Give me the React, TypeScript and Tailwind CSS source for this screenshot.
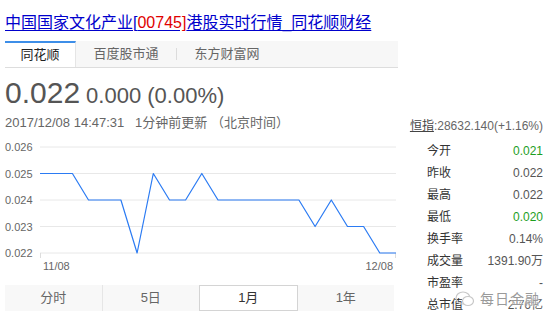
import React from 'react';

const FONT = "font-['Liberation_Sans','Noto_Sans_CJK_SC',sans-serif]";

const prices = [
  0.025, 0.025, 0.025, 0.024, 0.024, 0.024, 0.022, 0.025, 0.024, 0.024, 0.025, 0.024,
  0.024, 0.024, 0.024, 0.024, 0.024, 0.023, 0.024, 0.023, 0.023, 0.022, 0.022,
];

const levels = [0.026, 0.025, 0.024, 0.023, 0.022];

const stats = [
  { label: '今开', value: '0.021', green: true },
  { label: '昨收', value: '0.022' },
  { label: '最高', value: '0.022' },
  { label: '最低', value: '0.020', green: true },
  { label: '换手率', value: '0.14%' },
  { label: '成交量', value: '1391.90万' },
  { label: '市盈率', value: '-' },
  { label: '总市值', value: '2.76亿' },
];

const ranges = ['分时', '5日', '1月', '1年'];

const yOf = (v: number) => 13 + ((0.026 - v) / 0.001) * 26.5;

const PriceChart: React.FC = () => {
  const x0 = 40;
  const x1 = 396;
  const step = (x1 - x0) / (prices.length - 1);
  const points = prices.map((p, i) => `${(x0 + i * step).toFixed(1)},${yOf(p).toFixed(1)}`).join(' ');

  return (
    <svg width={398} height={145} className="block">
      {levels.map((lv) => (
        <g key={lv}>
          <line x1={x0} x2={x1} y1={yOf(lv)} y2={yOf(lv)} stroke="#e8e8e8" strokeWidth={1} />
          <text x={5} y={yOf(lv) + 4} fontSize={11} fill="#666" fontFamily="Liberation Sans, sans-serif">
            {lv.toFixed(3)}
          </text>
        </g>
      ))}
      <line x1={x0 + 0.5} x2={x0 + 0.5} y1={119} y2={124} stroke="#ddd" />
      <line x1={x1 - 0.5} x2={x1 - 0.5} y1={119} y2={124} stroke="#ddd" />
      <polyline points={points} fill="none" stroke="#2b7bf3" strokeWidth={1.2} strokeLinejoin="round" />
      <text x={43} y={136} fontSize={11} fill="#666" fontFamily="Liberation Sans, sans-serif">11/08</text>
      <text x={393} y={136} fontSize={11} fill="#666" textAnchor="end" fontFamily="Liberation Sans, sans-serif">12/08</text>
    </svg>
  );
};

export default function App() {
  return (
    <div className={`${FONT} relative w-[551px] h-[324px] overflow-hidden bg-white`}>
      <div className="pt-[12px] pl-[5px] text-[16px] leading-[22px] text-[#0000cc] underline underline-offset-[2px] whitespace-nowrap">
        中国国家文化产业[<span className="text-[#e00000]">00745]</span>港股实时行情_同花顺财经
      </div>

      <div className="mt-[7px] ml-[5px] w-[393px] h-[27px] flex items-stretch bg-[#f7f7f7] border-b border-[#dddddd] text-[13px]">
        <div className="w-[71px] flex items-center justify-center bg-white border-t-2 border-[#3d8ee8] border-r border-r-[#e5e5e5] text-[#222]">
          同花顺
        </div>
        <div className="w-[100px] flex items-center justify-center text-[#666]">百度股市通</div>
        <div className="w-px my-[7px] bg-[#dcdcdc]" />
        <div className="w-[100px] flex items-center justify-center text-[#666]">东方财富网</div>
      </div>

      <div className="flex">
        <div className="w-[395px]">
          <div className="pt-[10px] pl-[5px] flex items-baseline gap-[6px] text-[#555]">
            <span className="text-[30px] leading-[30px]">0.022</span>
            <span className="text-[22px] leading-[22px]">0.000 (0.00%)</span>
          </div>
          <div className="mt-[7px] pl-[5px] text-[13px] leading-[16px] text-[#666] whitespace-nowrap">
            2017/12/08 14:47:31&nbsp;&nbsp;&nbsp;1分钟前更新 （北京时间）
          </div>
          <div className="mt-[3px]">
            <PriceChart />
          </div>
          <div className="mt-[6px] ml-[5px] w-[389px] h-[26px] flex bg-[#f8f8f8] text-[13px]">
            {ranges.map((r, i) => (
              <div
                key={r}
                className={
                  i === 2
                    ? 'flex-1 flex items-center justify-center bg-white border border-[#d4d4d4] text-[#333]'
                    : i === 0
                      ? 'flex-1 flex items-center justify-center border-r border-[#e6e6e6] text-[#666]'
                      : 'flex-1 flex items-center justify-center text-[#666]'
                }
              >
                {r}
              </div>
            ))}
          </div>
        </div>

        <div className="flex-1 pt-[51px] pr-[8px]">
          <div className="text-right text-[12px] leading-[14px] text-[#666] whitespace-nowrap">
            <span className="underline text-[#444]">恒指</span>:28632.140(+1.16%)
          </div>
          <div className="mt-[7px] pl-[32px]">
            {stats.map((s) => (
              <div key={s.label} className="h-[22px] flex items-center justify-between text-[12px]">
                <span className="text-[#333]">{s.label}</span>
                <span className={s.green ? 'text-[#1e9e1e]' : 'text-[#555]'}>{s.value}</span>
              </div>
            ))}
          </div>
        </div>
      </div>

      <div className="absolute left-[455px] top-[290px] flex items-center gap-[5px] text-[#9a9a9a] [text-shadow:0_0_2px_#fff,0_0_2px_#fff]">
        <svg width={20} height={18} viewBox="0 0 20 18">
          <ellipse cx={8} cy={8} rx={7} ry={6} fill="none" stroke="#c8c8c8" strokeWidth={1.2} />
          <ellipse cx={13} cy={11} rx={5.5} ry={4.5} fill="#fff" stroke="#c8c8c8" strokeWidth={1.2} />
        </svg>
        <span className="text-[14px] leading-[16px] tracking-[1px]">每日金融</span>
      </div>
    </div>
  );
}
